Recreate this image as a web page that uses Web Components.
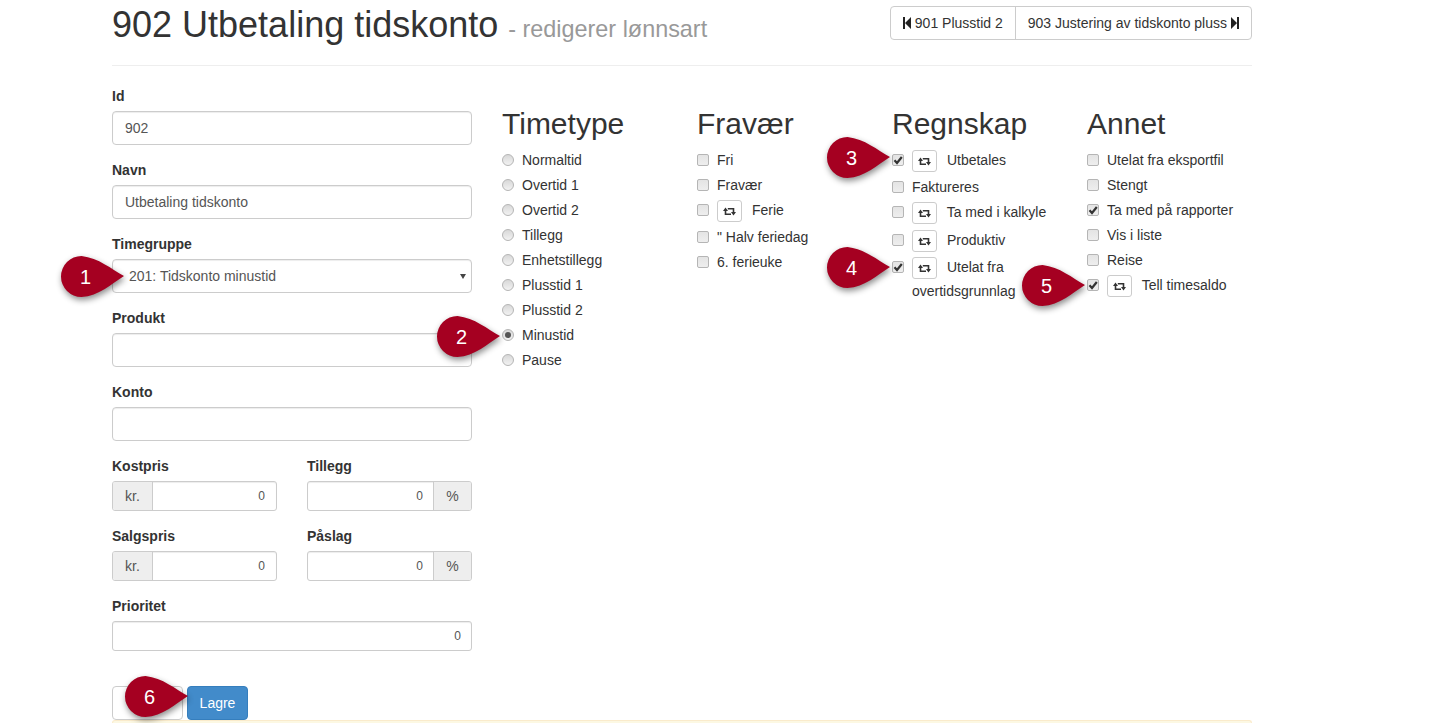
<!DOCTYPE html>
<html>
<head>
<meta charset="utf-8">
<title>902 Utbetaling tidskonto</title>
<style>
    html, body { margin: 0; height: 723px; overflow: hidden; background: #fff; }
    body { font: 14px/20px "Liberation Sans", Arial, sans-serif; color: #333; }
</style>
</head>
<body>
<wage-page>
    <page-header slot="header"></page-header>

    <form-field slot="form" label="Id"><text-box value="902"></text-box></form-field>
    <form-field slot="form" label="Navn"><text-box value="Utbetaling tidskonto"></text-box></form-field>
    <form-field slot="form" label="Timegruppe"><select-box value="201: Tidskonto minustid"></select-box></form-field>
    <form-field slot="form" label="Produkt"><text-box></text-box></form-field>
    <form-field slot="form" label="Konto"><text-box></text-box></form-field>
    <field-pair slot="form">
        <form-field label="Kostpris"><addon-box before="kr." value="0"></addon-box></form-field>
        <form-field label="Tillegg"><addon-box after="%" value="0"></addon-box></form-field>
    </field-pair>
    <field-pair slot="form">
        <form-field label="Salgspris"><addon-box before="kr." value="0"></addon-box></form-field>
        <form-field label="Påslag"><addon-box after="%" value="0"></addon-box></form-field>
    </field-pair>
    <form-field slot="form" label="Prioritet"><addon-box value="0"></addon-box></form-field>
    <form-actions slot="form"></form-actions>

    <option-list slot="options" title="Timetype">
        <option-row type="radio">Normaltid</option-row>
        <option-row type="radio">Overtid 1</option-row>
        <option-row type="radio">Overtid 2</option-row>
        <option-row type="radio">Tillegg</option-row>
        <option-row type="radio">Enhetstillegg</option-row>
        <option-row type="radio">Plusstid 1</option-row>
        <option-row type="radio">Plusstid 2</option-row>
        <option-row type="radio" checked>Minustid</option-row>
        <option-row type="radio">Pause</option-row>
    </option-list>
    <option-list slot="options" title="Fravær">
        <option-row>Fri</option-row>
        <option-row>Fravær</option-row>
        <option-row repeat>Ferie</option-row>
        <option-row>" Halv feriedag</option-row>
        <option-row>6. ferieuke</option-row>
    </option-list>
    <option-list slot="options" title="Regnskap">
        <option-row repeat checked>Utbetales</option-row>
        <option-row>Faktureres</option-row>
        <option-row repeat>Ta med i kalkyle</option-row>
        <option-row repeat>Produktiv</option-row>
        <option-row repeat checked>Utelat fra overtidsgrunnlag</option-row>
    </option-list>
    <option-list slot="options" title="Annet">
        <option-row>Utelat fra eksportfil</option-row>
        <option-row>Stengt</option-row>
        <option-row checked>Ta med på rapporter</option-row>
        <option-row>Vis i liste</option-row>
        <option-row>Reise</option-row>
        <option-row repeat checked>Tell timesaldo</option-row>
    </option-list>

    <call-out slot="pins" n="1" x="61" y="256"></call-out>
    <call-out slot="pins" n="2" x="437" y="316"></call-out>
    <call-out slot="pins" n="3" x="827" y="137"></call-out>
    <call-out slot="pins" n="4" x="827" y="247"></call-out>
    <call-out slot="pins" n="5" x="1022" y="265"></call-out>
    <call-out slot="pins" n="6" x="125" y="676"></call-out>
</wage-page>

<script>
function shadow(el, html) {
    el.attachShadow({mode: 'open'});
    el.shadowRoot.innerHTML = html;
}

class WagePage extends HTMLElement {
    constructor() {
        super();
        shadow(this, `
            <style>
                :host { display: block; width: 1140px; margin-left: 112px; }
                .columns { display: flex; align-items: flex-start; }
                .form { width: 360px; flex: none; margin-right: 30px; height: 634px; }
                .options { display: flex; }
                .notice {
                    height: 3px;
                    box-sizing: border-box;
                    background: #fcf8e3;
                    border: 1px solid #faebcc;
                    border-bottom: 0;
                    border-radius: 4px 4px 0 0;
                }
            </style>
            <slot name="header"></slot>
            <div class="columns">
                <div class="form"><slot name="form"></slot></div>
                <div class="options"><slot name="options"></slot></div>
            </div>
            <div class="notice"></div>
            <slot name="pins"></slot>`);
    }
}

class PageHeader extends HTMLElement {
    constructor() {
        super();
        shadow(this, `
            <style>
                :host { display: block; border-bottom: 1px solid #eee; margin-bottom: 20px; }
                .bar { display: flex; justify-content: space-between; height: 65px; }
                h1 { margin: 5px 0 0; font-size: 36px; line-height: 40px; font-weight: 500; color: #333; }
                small { font-size: 23.4px; font-weight: 400; color: #999; }
                .nav { display: flex; height: 34px; margin-top: 6px; box-sizing: border-box;
                       border: 1px solid #ccc; border-radius: 4px; }
                .nav a { display: flex; align-items: center; gap: 4px; padding: 0 12px; color: #333; }
                .nav a + a { border-left: 1px solid #ccc; }
                svg { width: 8px; height: 12px; fill: #222; display: block; }
            </style>
            <div class="bar">
                <h1>902 Utbetaling tidskonto <small>- redigerer lønnsart</small></h1>
                <div class="nav">
                    <a><svg viewBox="0 0 8 12"><path d="M0 0h2v12H0zM8 0v12L2 6z"/></svg>901 Plusstid 2</a>
                    <a>903 Justering av tidskonto pluss<svg viewBox="0 0 8 12"><path d="M6 0h2v12H6zM0 0v12l6-6z"/></svg></a>
                </div>
            </div>`);
    }
}

class FormField extends HTMLElement {
    constructor() {
        super();
        shadow(this, `
            <style>
                :host { display: block; margin-bottom: 15px; }
                label { display: block; font-weight: 700; margin-bottom: 5px; color: #333; }
            </style>
            <label></label>
            <slot></slot>`);
        this.shadowRoot.querySelector('label').textContent = this.getAttribute('label');
    }
}

class FieldPair extends HTMLElement {
    constructor() {
        super();
        shadow(this, `
            <style>
                :host { display: grid; grid-template-columns: 165px 165px; column-gap: 30px; }
            </style>
            <slot></slot>`);
    }
}

class TextBox extends HTMLElement {
    constructor() {
        super();
        shadow(this, `
            <style>
                :host {
                    display: block;
                    height: 34px;
                    box-sizing: border-box;
                    padding: 6px 12px;
                    border: 1px solid #ccc;
                    border-radius: 4px;
                    background: #fff;
                    color: #555;
                    box-shadow: inset 0 1px 1px rgba(0,0,0,.075);
                }
            </style>
            <span></span>`);
        this.shadowRoot.querySelector('span').textContent = this.getAttribute('value') || '';
    }
}

class SelectBox extends HTMLElement {
    constructor() {
        super();
        shadow(this, `
            <style>
                :host {
                    display: flex;
                    align-items: center;
                    justify-content: space-between;
                    height: 34px;
                    box-sizing: border-box;
                    padding: 0 4px 0 16px;
                    border: 1px solid #ccc;
                    border-radius: 4px;
                    background: #fff;
                    color: #555;
                    box-shadow: inset 0 1px 1px rgba(0,0,0,.075);
                }
                i { border: 3.5px solid transparent; border-top: 5px solid #444; border-bottom: 0; margin-right: 1px; }
            </style>
            <span></span><i></i>`);
        this.shadowRoot.querySelector('span').textContent = this.getAttribute('value');
    }
}

class AddonBox extends HTMLElement {
    constructor() {
        super();
        shadow(this, `
            <style>
                :host {
                    display: flex;
                    height: 30px;
                    box-sizing: border-box;
                    border: 1px solid #ccc;
                    border-radius: 3px;
                    background: #fff;
                    font-size: 12px;
                    line-height: 28px;
                    color: #555;
                    box-shadow: inset 0 1px 1px rgba(0,0,0,.075);
                    overflow: hidden;
                }
                .value { flex: 1; text-align: right; padding-right: 10px; }
                :host([before]) .value { padding-right: 11px; }
                .addon { background: #eee; color: #555; width: 39px; text-align: center; font-size: 14px; }
                .before { border-right: 1px solid #ccc; }
                .after { border-left: 1px solid #ccc; width: 37px; }
                .addon:empty { display: none; }
            </style>
            <span class="addon before"></span><span class="value"></span><span class="addon after"></span>`);
        const root = this.shadowRoot;
        root.querySelector('.before').textContent = this.getAttribute('before') || '';
        root.querySelector('.after').textContent = this.getAttribute('after') || '';
        root.querySelector('.value').textContent = this.getAttribute('value') || '';
    }
}

class FormActions extends HTMLElement {
    constructor() {
        super();
        shadow(this, `
            <style>
                :host { display: flex; gap: 4px; margin-top: 35px; }
                button {
                    font: inherit;
                    height: 34px;
                    border-radius: 4px;
                    border: 1px solid #ccc;
                    background: #fff;
                    color: #333;
                    padding: 0;
                }
                .back { width: 71px; }
                .save { width: 61px; background: #428bca; border-color: #357ebd; color: #fff; }
            </style>
            <button class="back"></button>
            <button class="save">Lagre</button>`);
    }
}

class OptionList extends HTMLElement {
    constructor() {
        super();
        shadow(this, `
            <style>
                :host { display: block; width: 195px; }
                h3 { margin: 21px 0 10px; font-size: 30px; line-height: 33px; font-weight: 500; color: #333; }
            </style>
            <h3></h3>
            <slot></slot>`);
        this.shadowRoot.querySelector('h3').textContent = this.getAttribute('title');
    }
}

class OptionRow extends HTMLElement {
    constructor() {
        super();
        const radio = this.getAttribute('type') === 'radio';
        const checked = this.hasAttribute('checked');
        const repeat = this.hasAttribute('repeat');
        const mark = radio
            ? '<b class="dot"></b>'
            : '<svg class="tick" viewBox="0 0 10 10"><path d="M1.500 5.200 4 8 8.800 2" fill="none" stroke="#333" stroke-width="2.200"/></svg>';
        shadow(this, `
            <style>
                :host {
                    display: block;
                    width: 145px;
                    padding-left: 20px;
                    margin-bottom: 5px;
                    min-height: 20px;
                    color: #333;
                }
                :host([repeat]) { margin-bottom: 3.4px; }
                .box {
                    float: left;
                    margin: 4px 0 0 -20px;
                    width: 12px;
                    height: 12px;
                    box-sizing: border-box;
                    border: 1px solid #b5b5b5;
                    border-radius: 2px;
                    background: linear-gradient(#e4e4e4, #eeeeee);
                    display: flex;
                    align-items: center;
                    justify-content: center;
                }
                .round { border-radius: 50%; background: linear-gradient(#d8d8d8, #f2f2f2); }
                .dot { width: 6px; height: 6px; border-radius: 50%; background: #555; }
                .tick { width: 10px; height: 10px; }
                .repeat {
                    display: inline-flex;
                    align-items: center;
                    justify-content: center;
                    width: 25px;
                    height: 22px;
                    box-sizing: border-box;
                    margin: 0 6px 2px 0;
                    vertical-align: top;
                    border: 1px solid #ccc;
                    border-radius: 3px;
                    background: #fff;
                }
                .repeat svg { width: 13px; height: 9px; margin-top: 1px; }
            </style>
            <span class="box ${radio ? 'round' : ''}">${checked ? mark : ''}</span>
            ${repeat ? '<span class="repeat"><svg viewBox="0 0 13 9"><path d="M2.500 3.500V7.300H8M4.800 1.700H10.500V5.500" fill="none" stroke="#333" stroke-width="1.600"/><path d="M0 4 2.500.5 5 4zM8 5l2.500 3.500L13 5z" fill="#333"/></svg></span>' : ''}
            <slot></slot>`);
    }
}

class CallOut extends HTMLElement {
    constructor() {
        super();
        shadow(this, `
            <style>
                :host { position: absolute; width: 63px; height: 41px; }
                svg { display: block; width: 63px; height: 41px; overflow: visible;
                      filter: drop-shadow(1px 3px 3px rgba(0,0,0,.45)); }
                span {
                    position: absolute;
                    left: 0;
                    top: 0;
                    width: 49px;
                    text-align: center;
                    font-size: 20px;
                    line-height: 43px;
                    color: #fff;
                }
            </style>
            <svg viewBox="0 0 63 41"><path fill="#a50021" d="M63 20C50 13 38 2 20.500 0A20.500 20.500 0 1 0 20.500 41C38 40 50 28 63 20Z"/></svg>
            <span></span>`);
        this.shadowRoot.querySelector('span').textContent = this.getAttribute('n');
        this.style.left = this.getAttribute('x') + 'px';
        this.style.top = this.getAttribute('y') + 'px';
    }
}

customElements.define('wage-page', WagePage);
customElements.define('page-header', PageHeader);
customElements.define('form-field', FormField);
customElements.define('field-pair', FieldPair);
customElements.define('text-box', TextBox);
customElements.define('select-box', SelectBox);
customElements.define('addon-box', AddonBox);
customElements.define('form-actions', FormActions);
customElements.define('option-list', OptionList);
customElements.define('option-row', OptionRow);
customElements.define('call-out', CallOut);
</script>
</body>
</html>
